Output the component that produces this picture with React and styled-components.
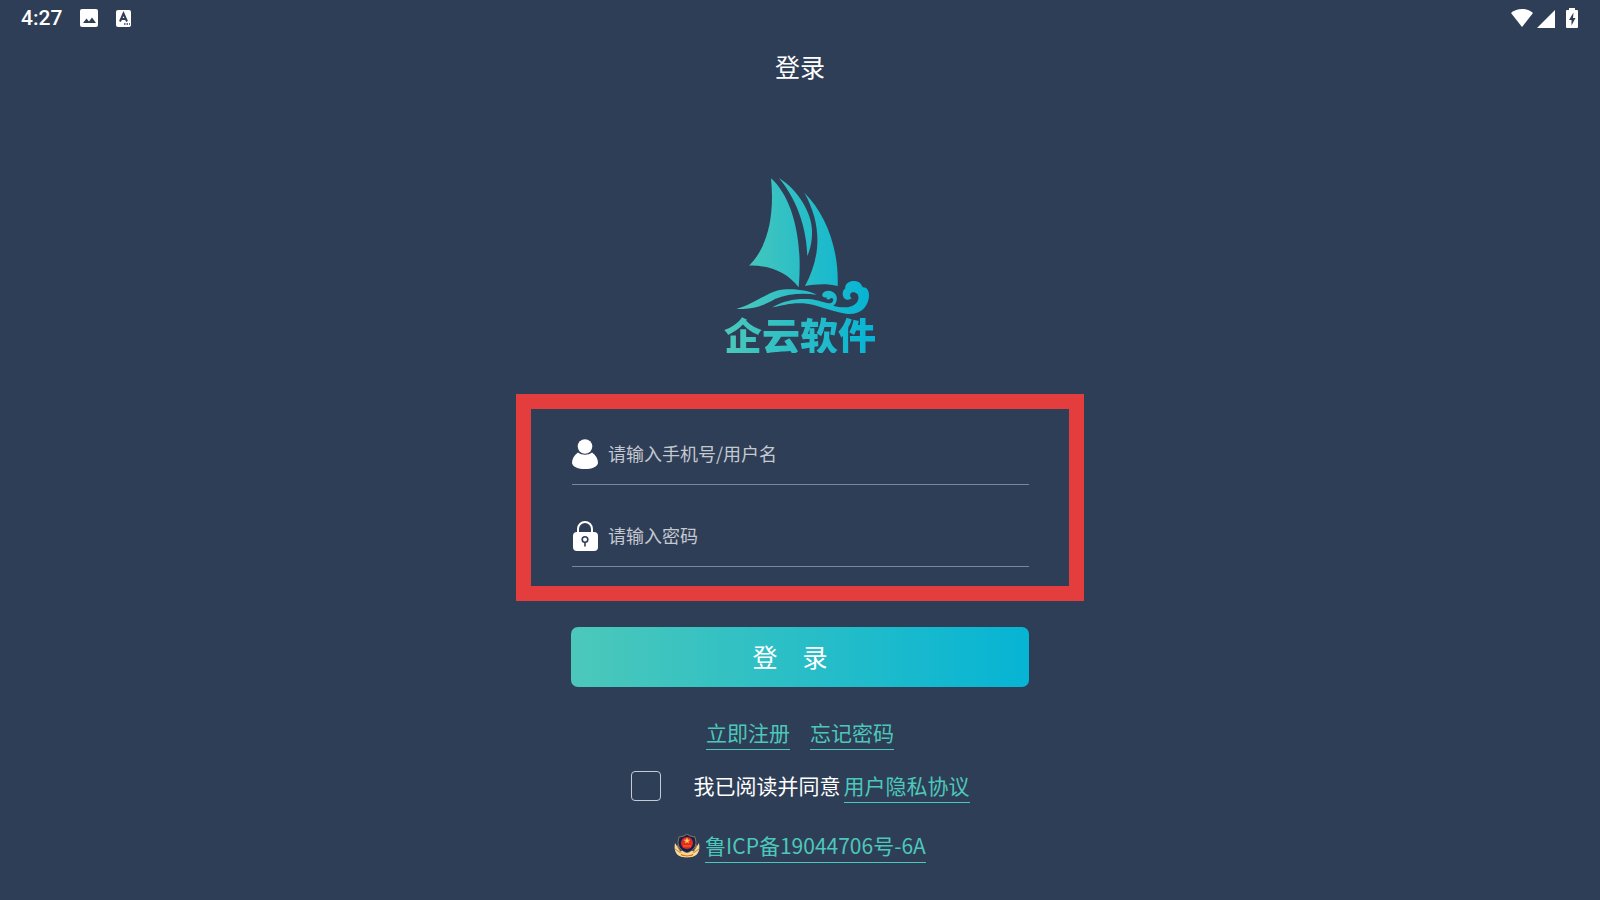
import React, { useState } from 'react';
import styled, { createGlobalStyle } from 'styled-components';

const GlobalStyle = createGlobalStyle`
  * {
    box-sizing: border-box;
  }

  body {
    margin: 0;
    background: #2f3e57;
    color: #fff;
    font-family: "Noto Sans CJK SC", sans-serif;
  }
`;

const StyledPage = styled.div`
  min-height: 100vh;
  display: flex;
  flex-direction: column;
  align-items: center;
`;

const StyledStatusBar = styled.div`
  width: 100%;
  height: 36px;
  padding: 0 22px 0 21px;
  display: flex;
  align-items: center;
  justify-content: space-between;
`;

const StyledStatusGroup = styled.div`
  display: flex;
  align-items: center;
  gap: ${({ $gap }) => $gap}px;
`;

const StyledClock = styled.span`
  font-family: Roboto, sans-serif;
  font-size: 21px;
  font-weight: 500;
`;

const StyledTitle = styled.h1`
  margin: 0;
  font-size: 25px;
  font-weight: 400;
  line-height: 60px;
`;

const StyledLogo = styled.div`
  margin-top: 74px;
  display: flex;
  flex-direction: column;
  align-items: center;

  svg {
    display: block;
  }
`;

const StyledLogoName = styled.span`
  font-size: 38px;
  font-weight: 900;
  line-height: 38px;
  background: linear-gradient(to right, #4cc8ba, #06b4d4);
  background-clip: text;
  color: transparent;
`;

const StyledForm = styled.form`
  width: 100%;
  max-width: 568px;
  margin-top: 41px;
  display: flex;
  flex-direction: column;
  align-items: center;
`;

const StyledFrame = styled.div`
  width: 100%;
  padding: 15px 40px 19px 41px;
  display: flex;
  flex-direction: column;
  gap: 21px;
  border: 15px solid #e43d3e;
`;

const StyledField = styled.label`
  height: 61px;
  display: flex;
  align-items: center;
  gap: 10px;
  border-bottom: 1px solid #7c879b;

  svg {
    flex: none;
  }
`;

const StyledInput = styled.input`
  flex: 1;
  min-width: 0;
  padding: 0 0 2px;
  border: 0;
  outline: 0;
  background: transparent;
  color: #fff;
  font-family: inherit;
  font-size: 18px;

  &::placeholder {
    color: #c4c8cf;
    opacity: 1;
  }
`;

const StyledSubmit = styled.button`
  width: calc(100% - 110px);
  height: 60px;
  margin-top: 26px;
  padding: 0 20px 2px 0;
  border: 0;
  border-radius: 7px;
  background: linear-gradient(to right, #4cc8ba, #06b4d4);
  color: #fff;
  font-family: inherit;
  font-size: 25px;
  cursor: pointer;
`;

const StyledLinks = styled.div`
  margin-top: 30px;
  display: flex;
  gap: 20px;
`;

const StyledLink = styled.a`
  padding-bottom: 2px;
  border-bottom: 1px solid #4cc8ba;
  color: #4cc8ba;
  font-size: 21px;
  line-height: 30px;
  text-decoration: none;
`;

const StyledAgreement = styled.div`
  margin-top: 20px;
  display: flex;
  align-items: center;
  font-size: 21px;
  line-height: 30px;

  label {
    margin: 0 3px 0 33px;
    padding-bottom: 3px;
  }
`;

const StyledCheckbox = styled.input`
  appearance: none;
  width: 30px;
  height: 30px;
  margin: 0 0 2px;
  border: 1px solid #c3cad8;
  border-radius: 4px;

  &:checked {
    background: #4cc8ba;
  }
`;

const StyledRecord = styled.div`
  margin-top: 27px;
  display: flex;
  align-items: center;
  gap: 5px;

  svg {
    margin-bottom: 2px;
  }
`;

function PictureIcon() {
  return (
    <svg width="18" height="18" viewBox="0 0 18 18" aria-hidden="true">
      <rect width="18" height="18" rx="2" fill="#fff" />
      <path d="M3 14l3.500-4.500 2.500 3 3-4 4 5.500z" fill="#2f3e57" />
    </svg>
  );
}

function LetterIcon() {
  return (
    <svg width="15" height="17" viewBox="0 0 15 17" aria-hidden="true">
      <rect width="15" height="17" rx="2" fill="#fff" />
      <path d="M4 11.500L7.500 3.500L11 11.500M5.300 9H9.700" fill="none" stroke="#2f3e57" strokeWidth="2" />
      <path d="M8 14h1.500M10.500 14h1.500M13 14h1" stroke="#2f3e57" strokeWidth="1.500" />
    </svg>
  );
}

function WifiIcon() {
  return (
    <svg width="24" height="20" viewBox="0 0 24 20" aria-hidden="true">
      <path d="M1 5C7-.500 17-.500 23 5L12 19z" fill="#fff" />
    </svg>
  );
}

function SignalIcon() {
  return (
    <svg width="19" height="19" viewBox="0 0 19 19" aria-hidden="true">
      <path d="M0 19L18 1V19z" fill="#fff" />
    </svg>
  );
}

function BatteryIcon() {
  return (
    <svg width="12" height="20" viewBox="0 0 12 20" aria-hidden="true">
      <path d="M3 2V0h6v2h2q1 0 1 1v16q0 1-1 1H1q-1 0-1-1V3q0-1 1-1z" fill="#fff" />
      <path d="M7.500 4.500L3 12h2.500v5.500L9.500 10H7z" fill="#2f3e57" />
    </svg>
  );
}

function UserIcon() {
  return (
    <svg width="26" height="30" viewBox="0 0 26 30" aria-hidden="true">
      <path d="M6 13.500C2 16 0 20 0 24C1 28 6 30 13 30S25 28 26 24C26 20 24 16 20 13.500C16 16.500 10 16.500 6 13.500z" fill="#fff" />
      <circle cx="13" cy="7.500" r="7.300" fill="#fff" />
    </svg>
  );
}

function LockIcon() {
  return (
    <svg width="26" height="30" viewBox="0 0 26 30" aria-hidden="true">
      <path d="M6 13V8a7 7 0 0 1 14 0v5" fill="none" stroke="#fff" strokeWidth="2" />
      <rect x="1" y="11" width="25" height="19" rx="4" fill="#fff" />
      <circle cx="13" cy="18.500" r="2.800" fill="none" stroke="#2f3e57" strokeWidth="1.600" />
      <path d="M13 21v4.500" stroke="#2f3e57" strokeWidth="1.600" />
    </svg>
  );
}

function ShipLogo() {
  return (
    <svg width="170" height="145" viewBox="0 0 510 435" aria-hidden="true">
      <defs>
        <linearGradient id="ship" gradientUnits="userSpaceOnUse" x1="60" y1="0" x2="464" y2="0">
          <stop offset="0" stopColor="#4cc8ba" />
          <stop offset="1" stopColor="#06b4d4" />
        </linearGradient>
      </defs>
      <g fill="url(#ship)">
        <path d="M168 25C235 85 264 215 251 352C215 305 160 285 102 287C155 235 180 145 168 25z" />
        <path d="M192 24C250 60 290 130 291 180C292 215 285 240 277 258C275 190 255 100 192 24z" />
        <path d="M268 68C330 130 372 230 368 348C335 340 300 343 270 348C315 265 325 170 268 68z" />
        <path d="M64 416C110 406 150 372 185 362C225 352 280 360 305 374C260 368 215 372 180 387C140 410 110 420 64 416z" />
        <path d="M172 412C210 390 250 384 290 388C315 391 335 404 350 398C360 390 352 379 345 386C339 392 332 386 335 382C325 385 318 377 324 369C334 357 356 361 363 375C369 388 363 402 355 407C385 416 413 413 425 398C437 382 428 364 412 367C402 370 405 382 410 385C400 394 383 388 383 371C383 363 387 358 391 355C389 338 409 330 424 334C437 337 441 347 443 352C457 350 465 366 461 386C455 420 425 436 393 431C340 423 310 404 265 400C230 397 205 406 172 412z" />
      </g>
    </svg>
  );
}

function PoliceBadge() {
  return (
    <svg width="26" height="24" viewBox="0 0 26 24" aria-hidden="true">
      <path d="M1 9C-1 20 5 24 13 23C21 24 27 20 25 9L20 17H6z" fill="#f3dc9b" />
      <path d="M3 11l4 8M1 15l7 5M23 11l-4 8M25 15l-7 5" stroke="#c88743" />
      <path d="M13 0L16 2L21 3Q23 9 21 13Q18 18 13 19Q8 18 5 13Q3 9 5 3L10 2z" fill="#17214f" stroke="#e7bd62" strokeWidth=".5" />
      <circle cx="13" cy="9" r="6" fill="#e52b20" />
      <path d="M13 4l1 2h2l-2 1 1 2-2-1-2 1 1-2-2-1h2zM9 12h8" fill="#ffd75c" stroke="#ffb24a" strokeWidth=".5" />
      <path d="M6 19Q13 23 20 19L19 22Q13 24 7 22z" fill="#dc5a34" stroke="#ffe178" />
    </svg>
  );
}

function App() {
  const [username, setUsername] = useState('');
  const [password, setPassword] = useState('');
  const [agreed, setAgreed] = useState(false);

  return (
    <>
      <GlobalStyle />
      <StyledPage>
        <StyledStatusBar>
          <StyledStatusGroup $gap={18}>
            <StyledClock>4:27</StyledClock>
            <PictureIcon />
            <LetterIcon />
          </StyledStatusGroup>
          <StyledStatusGroup $gap={10}>
            <StyledStatusGroup $gap={3}>
              <WifiIcon />
              <SignalIcon />
            </StyledStatusGroup>
            <BatteryIcon />
          </StyledStatusGroup>
        </StyledStatusBar>
        <StyledTitle>登录</StyledTitle>
        <StyledLogo>
          <ShipLogo />
          <StyledLogoName>企云软件</StyledLogoName>
        </StyledLogo>
        <StyledForm onSubmit={(e) => e.preventDefault()}>
          <StyledFrame>
            <StyledField>
              <UserIcon />
              <StyledInput
                type="text"
                aria-label="用户名"
                placeholder="请输入手机号/用户名"
                value={username}
                onChange={(e) => setUsername(e.target.value)}
              />
            </StyledField>
            <StyledField>
              <LockIcon />
              <StyledInput
                type="password"
                aria-label="密码"
                placeholder="请输入密码"
                value={password}
                onChange={(e) => setPassword(e.target.value)}
              />
            </StyledField>
          </StyledFrame>
          <StyledSubmit type="submit">登　录</StyledSubmit>
          <StyledLinks>
            <StyledLink href="#register">立即注册</StyledLink>
            <StyledLink href="#forgot">忘记密码</StyledLink>
          </StyledLinks>
          <StyledAgreement>
            <StyledCheckbox
              id="agree"
              type="checkbox"
              checked={agreed}
              onChange={(e) => setAgreed(e.target.checked)}
            />
            <label htmlFor="agree">我已阅读并同意</label>
            <StyledLink href="#privacy">用户隐私协议</StyledLink>
          </StyledAgreement>
          <StyledRecord>
            <PoliceBadge />
            <StyledLink href="#record">鲁ICP备19044706号-6A</StyledLink>
          </StyledRecord>
        </StyledForm>
      </StyledPage>
    </>
  );
}

export default App;
